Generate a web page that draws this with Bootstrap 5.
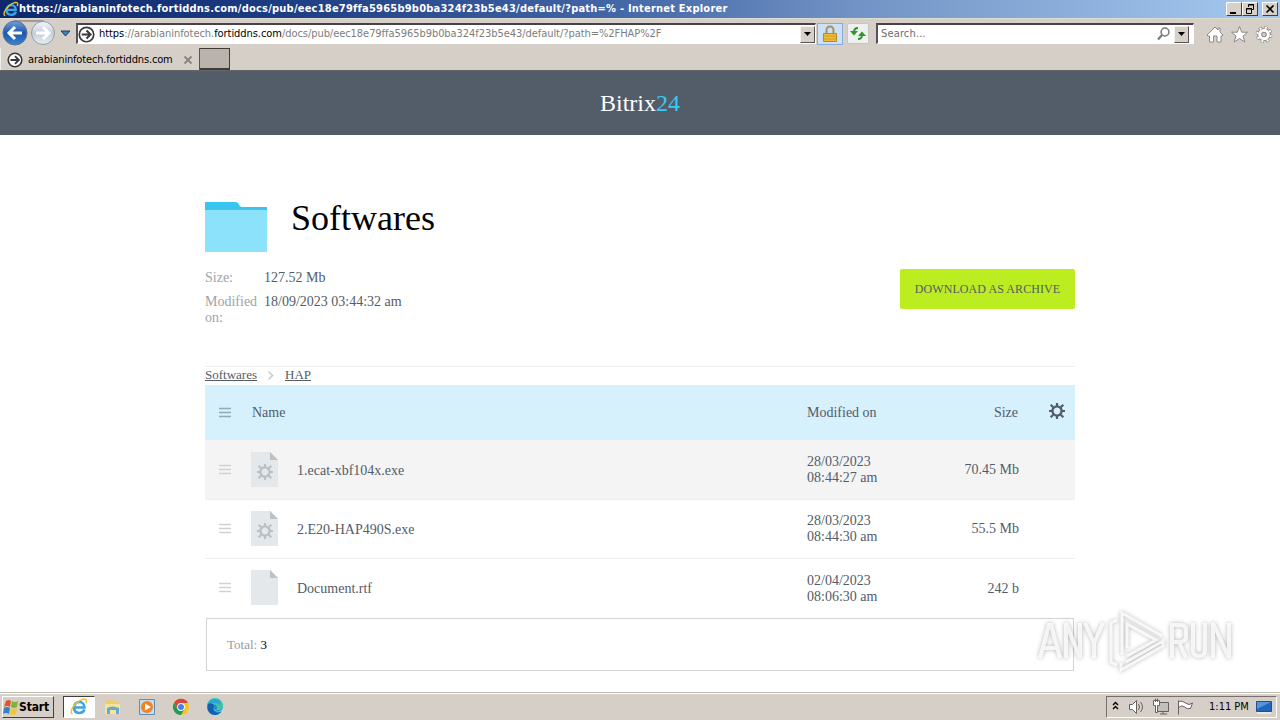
<!DOCTYPE html>
<html lang="en">
<head>
    <meta charset="UTF-8">
    <meta name="viewport" content="width=device-width, initial-scale=1.0">
    <title>Bitrix24 - Softwares</title>
    <link href="https://cdn.jsdelivr.net/npm/bootstrap@5.3.0/dist/css/bootstrap.min.css" rel="stylesheet">
    <style>
        body {
            width: 1280px;
            height: 720px;
            overflow: hidden;
            background: #fff;
            color: #535c69;
            font-family: "Liberation Serif", serif;
            font-size: 14px;
            line-height: 16px;
        }
        svg { display: block; flex: none; }

        /* Browser window */
        .chrome-ui {
            font-family: "DejaVu Sans Condensed", "DejaVu Sans", sans-serif;
            font-size: 11px;
            line-height: 14px;
            color: #000;
            white-space: nowrap;
        }
        .title-bar {
            height: 18px;
            background: linear-gradient(90deg, #0d286c 0%, #1b3a80 20%, #4366a6 48%, #7193c5 67%, #a5caf0 100%);
            color: #fff;
            font-weight: bold;
            padding: 0 2px 0 3px;
        }
        .title-text { letter-spacing: .22px; }
        .win-btn {
            width: 16px;
            height: 14px;
            background: #d6d0c8;
            border: 1px solid;
            border-color: #fff #404040 #404040 #fff;
        }
        .address-row { height: 30px; background: #d6cfc8; border-top: 1px solid #dedbd0; }
        .sunken {
            background: #fff;
            border: 1px solid #fff;
            border-top: 2px solid #47424a;
            border-left: 2px solid #56515a;
            height: 21px;
        }
        .url-box { width: 740px; }
        .url-text { color: #7d7d7d; margin-left: 4px; letter-spacing: -.055px; }
        .url-text b { color: #000; font-weight: normal; }
        .search-box { width: 318px; margin-left: 7px; color: #6d6d6d; }
        .search-box span { letter-spacing: .15px; margin-left: -1px; }
        .drop-btn {
            width: 15px;
            height: 17px;
            background: #d6d0c8;
            border: 1px solid;
            border-color: #f4f2ee #555 #555 #f4f2ee;
        }
        .lock-btn { width: 26px; height: 22px; margin-left: 1px; background: #cce0f8; border: 1px solid #86addb; }
        .refresh-btn { width: 22px; height: 21px; background: #edf1ee; border: 1px solid #c5c6c5; border-radius: 2px; }
        .tab-row { height: 23px; background: #d6cfc8; border-bottom: 1px solid #666; }
        .page-tab { width: 200px; border-right: 1px solid #57534f; border-left: 1px solid #eee; padding-left: 6px; padding-top: 2px; }
        .tab-label { margin-left: 5px; width: 152px; letter-spacing: -.17px; }
        .new-tab { width: 30px; height: 22px; background: #bab3ad; border: 1px solid #3d3a38; border-width: 1px 1px 2px 0; }

        /* Page */
        .brand-bar { height: 64px; background: #535c69; color: #fff; font-size: 24px; line-height: 64px; }
        .brand-bar span { color: #3ac8f5; }
        .doc-area { width: 870px; height: 557px; margin: 0 auto; padding-top: 67px; }
        .doc-title { font-size: 36px; line-height: 33px; color: #000; margin: 0 0 0 24px; }
        .doc-info { padding-top: 2px; }
        .info-label { width: 59px; color: #a0a3a7; }
        .download-btn {
            width: 175px;
            height: 40px;
            margin-top: 1px;
            padding: 0;
            background: #bbed21;
            border: 0;
            border-radius: 2px;
            color: #535c69;
            font-size: 12px;
            letter-spacing: .08px;
        }
        .crumbs { height: 19px; margin-top: 40px; border-top: 1px solid #eef0f0; font-size: 13px; line-height: 15px; }
        .crumbs a { color: #535c69; }
        .files-table { table-layout: fixed; width: 870px; margin: 0 0 1px; color: #535c69; }
        .files-table > :not(caption) > * > * { padding: 0; border: 0; color: inherit; background: transparent; box-shadow: none; vertical-align: middle; font-weight: normal; }
        .files-table thead tr { height: 55px; background: #d6f0fc; }
        .files-table thead th:nth-child(2) { padding-left: 1px; }
        .files-table thead th:nth-child(4) { padding-right: 1px; }
        .files-table tbody tr { height: 59px; border-bottom: 1px solid #edeff0; }
        .files-table tbody tr:first-child { background: #f4f4f4; }
        .files-table tbody tr:last-child { border-bottom: 0; }
        .files-table tbody tr:nth-child(odd) td:nth-child(n+3) { padding-top: 2px; }
        .drag-icon { margin-left: 14px; }
        .gear-icon { margin: 0 10px 3px auto; }
        .file-name { margin-left: 19px; padding-top: 2px; }
        tr:first-child .file-name { padding-top: 3px; }
        .total-box { width: 868px; height: 53px; margin-left: 1px; border: 1px solid #d3d3d3; padding-left: 20px; font-size: 13px; color: #959ba3; }
        .total-box b { font-weight: normal; color: #000; }

        /* Watermark lies over the page */
        .watermark { position: absolute; left: 1030px; top: 602px; filter: drop-shadow(0 0 2px rgba(0, 0, 0, .36)); }

        /* Taskbar */
        .task-bar { height: 28px; background: #d6cfc8; border-top: 1px solid #bdb8b2; box-shadow: inset 0 1px #fff; padding: 3px 3px 2px 2px; }
        .start-btn { width: 52px; height: 22px; border: 1px solid; border-color: #fff #404040 #404040 #fff; font-weight: bold; font-size: 12px; letter-spacing: -.15px; }
        .task-active { width: 32px; height: 22px; margin-left: 9px; background: #fff; border: 1px solid; border-color: #404040 #fff #fff #404040; }
        .tray { width: 171px; height: 22px; border: 1px solid; border-color: #77716c #fff #fff #77716c; padding-left: 5px; }
    </style>
</head>
<body>
    <!-- Shared icons -->
    <svg width="0" height="0" class="position-absolute">
        <defs>
            <symbol id="gear" viewBox="-8 -8 16 16">
                <circle r="4.6" fill="none" stroke="currentColor" stroke-width="2.4"/>
                <path d="M0-8V-5M0 8V5M-8 0H-5M8 0H5M-6.3-6.3L-3.8-3.8M6.3 6.3L3.8 3.8M-6.3 6.3L-3.8 3.8M6.3-6.3L3.8-3.8" stroke="currentColor" stroke-width="2.2"/>
            </symbol>
            <symbol id="file" viewBox="0 0 27 35">
                <path d="M0 0H19L27 8V35H0Z" fill="#e4e8eb"/>
                <path d="M19 0L27 8H19Z" fill="#bcc1c6"/>
            </symbol>
            <symbol id="bars" viewBox="0 0 12 11">
                <path d="M0 1.5H12M0 5.5H12M0 9.5H12" stroke="currentColor" stroke-width="1.6"/>
            </symbol>
            <symbol id="ie" viewBox="0 0 18 18">
                <path d="M14.5 11.5C13.5 14 11.7 15 9.3 15C6 15 4 12.8 4 9.6S6.2 4 9.3 4S14.4 6.3 14.4 9.5H4.5" fill="none" stroke="#3ba5e4" stroke-width="2.6"/>
                <path d="M2.5 16C-.5 15 2 9 6.5 5S16 0 16.5 2.4C16.7 3.3 16.4 4.2 15.8 5.2" fill="none" stroke="#f0c52c" stroke-width="1.5"/>
            </symbol>
            <symbol id="site" viewBox="0 0 16 16">
                <circle cx="8" cy="8" r="6.8" fill="#fff" stroke="#39393b" stroke-width="1.6"/>
                <path d="M3.5 8H11.5M8 4.2L11.8 8L8 11.8" fill="none" stroke="#39393b" stroke-width="1.9"/>
            </symbol>
            <symbol id="drop" viewBox="0 0 7 4">
                <path d="M0 0H7L3.5 4Z"/>
            </symbol>
        </defs>
    </svg>

    <div class="chrome-ui">
        <div class="title-bar d-flex align-items-center">
            <svg width="16" height="17"><use href="#ie"/></svg>
            <span class="title-text">https://arabianinfotech.fortiddns.com/docs/pub/eec18e79ffa5965b9b0ba324f23b5e43/default/?path=% - Internet Explorer</span>
            <div class="d-flex ms-auto">
                <div class="win-btn"><svg width="14" height="12"><path d="M3 9H9V11H3Z"/></svg></div>
                <div class="win-btn"><svg width="14" height="12"><path d="M5.5 4V1.5H10.5V6.5H8M5 2H11M3.5 5.5H8.5V10.5H3.5ZM3 6H9" fill="none" stroke="#000"/></svg></div>
                <div class="win-btn ms-1"><svg width="14" height="12"><path d="M3.5 2.5L10.5 9.5M10.5 2.5L3.5 9.5" stroke="#000" stroke-width="1.7"/></svg></div>
            </div>
        </div>

        <div class="address-row d-flex align-items-center">
            <svg width="76" height="29" viewBox="0 0 76 29">
                <defs>
                    <linearGradient id="backFill" x2="0" y2="1"><stop stop-color="#6fa2dc"/><stop offset=".5" stop-color="#1e56a8"/><stop offset="1" stop-color="#3388d5"/></linearGradient>
                    <linearGradient id="fwdFill" x2="0" y2="1"><stop stop-color="#f5f8fa"/><stop offset=".5" stop-color="#c4ced8"/><stop offset="1" stop-color="#e8eff4"/></linearGradient>
                </defs>
                <path d="M14 2H44" stroke="#918d8c" stroke-width="1.5"/>
                <circle cx="15" cy="14" r="12" fill="url(#backFill)" stroke="#5e7290"/>
                <circle cx="43" cy="14" r="11.5" fill="url(#fwdFill)" stroke="#8e9daa"/>
                <path d="M22 14H9M15 8L9 14L15 20" fill="none" stroke="#fff" stroke-width="3"/>
                <path d="M36 14H49M43 8L49 14L43 20" fill="none" stroke="#fff" stroke-width="3"/>
                <path d="M61 12H70L65.5 17Z" fill="#3b83b8" stroke="#173f68"/>
            </svg>
            <div class="sunken url-box d-flex align-items-center">
                <svg width="17" height="17"><use href="#site"/></svg>
                <span class="url-text"><b>https</b>://arabianinfotech.<b>fortiddns.com</b>/docs/pub/eec18e79ffa5965b9b0ba324f23b5e43/default/?path=%2FHAP%2F</span>
                <div class="drop-btn d-flex align-items-center justify-content-center ms-auto"><svg width="7" height="4"><use href="#drop"/></svg></div>
            </div>
            <div class="lock-btn d-flex align-items-center justify-content-center">
                <svg width="14" height="18" viewBox="0 0 14 18">
                    <path d="M3.5 9V5A3.5 3.5 0 0 1 10.5 5V9" fill="none" stroke="#a79357" stroke-width="2"/>
                    <path d="M.5 8.5H13.5V16.5H.5Z" fill="#f0bd36" stroke="#b88a26"/>
                    <path d="M1 11H13M1 14H13" stroke="#cf9c29"/>
                </svg>
            </div>
            <div class="refresh-btn d-flex align-items-center justify-content-center ms-1">
                <svg width="16" height="15" viewBox="0 0 16 15">
                    <path d="M8 2Q4 2 4 6M8 13Q12 13 12 9" fill="none" stroke="#30942e" stroke-width="1.9"/>
                    <path d="M0 5H8L4 9.5ZM8 10H16L12 5.5Z" fill="#30942e"/>
                </svg>
            </div>
            <div class="sunken search-box d-flex align-items-center ps-1">
                <span>Search...</span>
                <svg class="ms-auto me-1" width="13" height="14" viewBox="0 0 13 14">
                    <circle cx="8" cy="5" r="3.9" fill="none" stroke="#777" stroke-width="1.5"/>
                    <path d="M5 8L1 12.5" stroke="#777" stroke-width="2.2"/>
                </svg>
                <div class="drop-btn d-flex align-items-center justify-content-center me-1"><svg width="7" height="4"><use href="#drop"/></svg></div>
            </div>
            <svg class="ms-auto me-1" width="70" height="20" viewBox="0 0 70 20">
                <g fill="#fff" stroke="#8d8986" stroke-width="1">
                    <path d="M1 11L9 3L12 6V4H14V8L17 11L16 12H15V18H11V12H7.5V18H3.5V12H2Z"/>
                    <path d="M33.5 2.5L35.7 8.2H41.5L37 12L38.8 18L33.5 14.5L28.2 18L30 12L25.5 8.2H31.3Z"/>
                </g>
                <circle cx="58" cy="10.5" r="6.8" fill="none" stroke="#8d8986" stroke-width="3" stroke-dasharray="3.2 2.14"/>
                <circle cx="58" cy="10.5" r="4.3" fill="none" stroke="#8d8986" stroke-width="5"/>
                <circle cx="58" cy="10.5" r="6.8" fill="none" stroke="#fff" stroke-width="2" stroke-dasharray="2 3.34" stroke-dashoffset="-.6"/>
                <circle cx="58" cy="10.5" r="4.3" fill="none" stroke="#fff" stroke-width="3"/>
            </svg>
        </div>

        <div class="tab-row d-flex">
            <div class="page-tab d-flex align-items-center">
                <svg width="16" height="16"><use href="#site"/></svg>
                <span class="tab-label">arabianinfotech.fortiddns.com</span>
                <svg class="ms-1" width="8" height="8"><path d="M.5 .5L7.5 7.5M7.5 .5L.5 7.5" stroke="#85807c" stroke-width="1.9"/></svg>
            </div>
            <div class="new-tab"></div>
        </div>
    </div>

    <header class="brand-bar text-center">Bitrix<span>24</span></header>

    <main class="doc-area">
        <div class="d-flex">
            <svg width="62" height="50" viewBox="0 0 62 50">
                <path d="M0 0H31C34 0 34 5 37 5H62V12H0Z" fill="#39c5f2"/>
                <path d="M0 8H62V49Q62 50 61 50H1Q0 50 0 49Z" fill="#8ce1fb"/>
            </svg>
            <h1 class="doc-title">Softwares</h1>
        </div>
        <div class="d-flex justify-content-between mt-3">
            <div class="doc-info">
                <div class="d-flex mb-2">
                    <div class="info-label">Size:</div>
                    <div>127.52 Mb</div>
                </div>
                <div class="d-flex">
                    <div class="info-label">Modified on:</div>
                    <div>18/09/2023 03:44:32 am</div>
                </div>
            </div>
            <button type="button" class="btn download-btn">DOWNLOAD AS ARCHIVE</button>
        </div>

        <nav class="crumbs d-flex">
            <a href="#">Softwares</a>
            <svg width="28" height="17"><path d="M11.5 4.5L15.5 8.5L11.5 12.5" fill="none" stroke="#c5cace" stroke-width="1.5"/></svg>
            <a href="#">HAP</a>
        </nav>

        <table class="table files-table">
            <colgroup><col width="46"><col width="556"><col width="92"><col width="120"><col width="56"></colgroup>
            <thead>
                <tr>
                    <th><svg class="drag-icon" width="12" height="11" color="#8faab8"><use href="#bars"/></svg></th>
                    <th>Name</th>
                    <th>Modified on</th>
                    <th class="text-end">Size</th>
                    <th><svg class="gear-icon" width="16" height="16" color="#535c69"><use href="#gear"/></svg></th>
                </tr>
            </thead>
            <tbody id="fileRows"></tbody>
        </table>
        <div class="total-box d-flex align-items-center">Total:&nbsp;<b>3</b></div>
    </main>

    <svg class="watermark" width="210" height="76" viewBox="0 0 210 76">
        <g fill="none" stroke="#fff" stroke-width="4" stroke-opacity=".8">
            <path d="M10 56L19 23H21L30 56M13 46H27"/>
            <path d="M36 56V21L50 56V21"/>
            <path d="M55 21L64 41L73 21M64 40V56"/>
            <path d="M142 56V23H150Q156 23 156 29V34Q156 40 150 40H142M149 40L156 56"/>
            <path d="M163 21V48Q163 54 169 54T175 48V21"/>
            <path d="M183 56V21L199 56V21"/>
            <path d="M87 18L81 21V60L87 63M92 53V11L132 34M97 54L126 38L97 22V46M91 61V68L133 44V39L96 60" stroke-width="3"/>
        </g>
    </svg>

    <footer class="chrome-ui task-bar d-flex">
        <div class="start-btn d-flex align-items-center">
            <svg width="16" height="17" viewBox="0 0 16 17">
                <path d="M3 2Q6 0 8 2L7 8Q4 6 1 8Z" fill="#e65327"/>
                <path d="M9 2Q12 4 15 2L14 8Q11 10 8 8Z" fill="#7bb536"/>
                <path d="M1 9Q4 7 7 9L6 15Q3 13 0 15Z" fill="#3681c5"/>
                <path d="M8 9Q11 11 14 9L13 15Q10 17 7 15Z" fill="#f4c52e"/>
            </svg>
            <span>Start</span>
        </div>
        <div class="task-active d-flex align-items-center justify-content-center"><svg width="18" height="18"><use href="#ie"/></svg></div>
        <svg width="136" height="22" viewBox="0 0 136 22">
            <!-- Explorer -->
            <path d="M11 4H18L19 6H25V11H11Z" fill="#e9cd70"/>
            <path d="M10 8H25V18H10Z" fill="#f7e39b"/>
            <path d="M12 18V12Q17 9 24 12V18H21V14H15V18Z" fill="#65a9ce"/>
            <!-- Media player -->
            <path d="M44.5 3.5H59.5V18.5H44.5Z" fill="#c4dceb" stroke="#5f8dbb"/>
            <circle cx="52" cy="11" r="6" fill="#ef8221"/>
            <path d="M50 7.5L56 11L50 14.5Z" fill="#fff"/>
            <!-- Chrome -->
            <circle cx="86" cy="11" r="8" fill="#f3c623"/>
            <path d="M79 7A8 8 0 0 1 93 7H86L82.5 13Z" fill="#db4437"/>
            <path d="M79 7A8 8 0 0 0 86 19L89.5 13H82.5Z" fill="#239b57"/>
            <circle cx="86" cy="11" r="3.9" fill="#fff"/>
            <circle cx="86" cy="11" r="3" fill="#4285e4"/>
            <!-- Edge -->
            <circle cx="120" cy="11" r="8" fill="#1689d0"/>
            <path d="M112 10A8 8 0 0 1 128 10C128 14 124 15 121 14C124 10 119 6 112 10Z" fill="#43c5a5"/>
            <path d="M112 10A8 8 0 0 1 122 3.3Q127 5 125 9Q119 4 112 10Z" fill="#2ba5d8"/>
            <path d="M113 8Q118 6 119 10Q116 14 122 17Q125 17 126 15Q124 19 119 19Q111 17 113 8Z" fill="#1560ae"/>
            <path d="M120 10Q118 14 122 15Q126 16 128 12V15Q122 17 119 14Z" fill="#d6cfc8"/>
        </svg>
        <div class="tray d-flex align-items-center ms-auto">
            <svg width="89" height="20" viewBox="0 0 89 20">
                <path d="M1 8L3.5 5.5L6 8M1 12L3.5 9.5L6 12" fill="none" stroke="#000" stroke-width="1.4"/>
                <g fill="#fff" stroke="#67625f">
                    <path d="M17.5 7.5H20.5L24.5 3.5V16.5L20.5 12.5H17.5Z"/>
                    <path d="M26.5 7Q28.5 10 26.5 13M28.5 5Q32.5 10 28.5 15" fill="none"/>
                    <path d="M45.5 5.5H56.5V14.5H45.5ZM48 17H55M51 15V17" fill="#c2c0bd"/>
                    <path d="M41.5 3.5H47.5V8.5H45.5V15.5H43.5V8.5H41.5ZM43.5 1.5V5M45.5 1.5V5"/>
                    <path d="M66.5 17.5V3.5M66.5 4.5Q70 3 73.5 6T80.5 6L78.5 11.5Q75 12.5 72.5 10T66.5 10.5Z"/>
                </g>
            </svg>
            <span class="ms-2">1:11 PM</span>
            <svg class="ms-auto me-1" width="16" height="14" viewBox="0 0 16 14">
                <path d="M.5 1.5H15.5V11.5H.5Z" fill="#2265bd" stroke="#244f89"/>
                <path d="M1 2H15L1 9Z" fill="#5593da"/>
                <path d="M1 13H15" stroke="#fff"/>
            </svg>
        </div>
    </footer>

    <script src="https://cdn.jsdelivr.net/npm/bootstrap@5.3.0/dist/js/bootstrap.bundle.min.js"></script>
    <script>
        const files = [
            { name: '1.ecat-xbf104x.exe', date: '28/03/2023', time: '08:44:27 am', size: '70.45 Mb', exe: true },
            { name: '2.E20-HAP490S.exe', date: '28/03/2023', time: '08:44:30 am', size: '55.5 Mb', exe: true },
            { name: 'Document.rtf', date: '02/04/2023', time: '08:06:30 am', size: '242 b', exe: false }
        ];

        // Fill the file table
        files.forEach(file => {
            const row = document.createElement('tr');
            row.innerHTML = `
                <td><svg class="drag-icon" width="12" height="11" color="#cfd2d4"><use href="#bars"/></svg></td>
                <td>
                    <div class="d-flex align-items-center">
                        <svg width="27" height="35">
                            <use href="#file"/>
                            ${file.exe ? '<use href="#gear" x="6" y="12" width="16" height="16" color="#b9c0c7"/>' : ''}
                        </svg>
                        <span class="file-name">${file.name}</span>
                    </div>
                </td>
                <td>${file.date}<br>${file.time}</td>
                <td class="text-end">${file.size}</td>
                <td></td>
            `;
            document.getElementById('fileRows').appendChild(row);
        });
    </script>
</body>
</html>
